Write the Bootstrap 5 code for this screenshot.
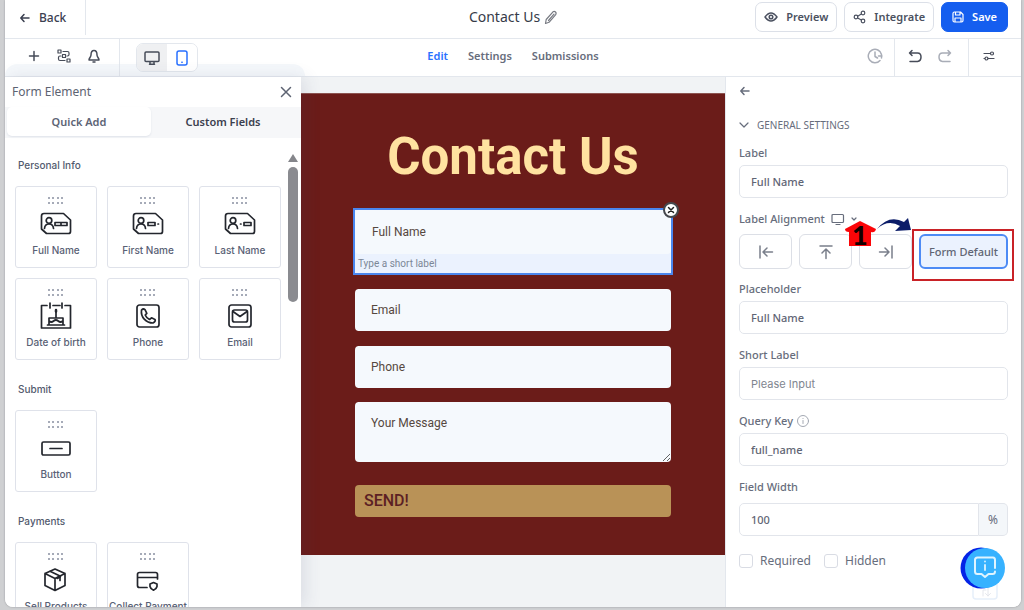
<!DOCTYPE html>
<html lang="en">
<head>
<meta charset="utf-8">
<meta name="viewport" content="width=device-width, initial-scale=1">
<title>Contact Us - Form Builder</title>
<link href="https://cdn.jsdelivr.net/npm/bootstrap@5.3.0/dist/css/bootstrap.min.css" rel="stylesheet">
<style>
  :root { --line:#e3e7ed; --ink:#474c59; --soft:#676d7c; --blue:#155eef; }
  body { background:#cfd0d2; font-family:"Noto Sans",sans-serif; font-size:12px; line-height:20px; color:var(--ink); }
  svg { display:block; flex:none; fill:none; stroke:currentColor; stroke-width:1.5; stroke-linecap:round; stroke-linejoin:round; }
  button { font-family:inherit; }
  .shell { height:100vh; padding:0 3px 3px 5px; }
  .app { background:#fff; border-radius:0 0 8px 8px; box-shadow:0 0 2px #8d8f93; }
  .bar-top { height:39px; border-bottom:1px solid var(--line); padding-bottom:4px; }
  .bar-tools { height:38px; border-bottom:1px solid var(--line); }
  .bar-tools::before { content:""; position:absolute; left:0; bottom:0; width:300px; height:12px; border-radius:40px 40px 0 0; background:#f5f8fb; }
  .side { flex:1 1 0; }
  .side.actions { gap:7px; }
  .back { width:81px; height:35px; padding-left:14px; border-right:1px solid var(--line); font-weight:500; color:#3b4050; }
  .doc-title { font-size:14px; color:#363b48; }
  .pencil { stroke:#777a82; stroke-width:1.2; }
  .top-btn { height:30px; border:1px solid #dce0e8; border-radius:7px; font-size:11px; font-weight:600; color:#4b5160; padding:0 8px; background:#fff; }
  .top-btn.save { background:var(--blue); border-color:var(--blue); color:#fff; padding:0 10px; margin-right:13px; }
  .thin { stroke-width:1.2; }
  .icon-btn { border:0; background:none; padding:0; width:30px; height:30px; display:flex; align-items:center; justify-content:center; color:inherit; }
  .faded { color:#a9adb7; }
  .tools-left { width:115px; padding:0 0 3px 14px; border-right:1px solid var(--line); }
  .devices { height:29px; border:1px solid var(--line); border-radius:7px; overflow:hidden; }
  .devices .icon-btn { background:#fff; color:#2970ff; height:100%; }
  .devices .icon-btn.on { background:#eff0f2; color:var(--ink); }
  .views { gap:20px; }
  .view-link { font-weight:600; font-size:11px; color:var(--soft); text-decoration:none; }
  .view-link.on { color:#2970ff; }
  .cell { border-left:1px solid var(--line); padding-left:5px; }
  .cell.history-nav { width:74px; }
  .cell.prefs { width:53px; }

  .elements { width:296px; box-shadow:4px 0 16px rgba(60,65,110,.12); z-index:2; }
  .elements-head { height:30px; padding:0 5px 0 7px; color:#5d6372; }
  .kinds { background:#f6f7f9; height:31px; padding:0 6px 0 2px; font-weight:600; color:#3b404e; }
  .kinds button { border:0; background:none; font:inherit; font-size:11px; color:inherit; flex:1 1 0; height:29px; }
  .kinds .on { background:#fff; border-radius:5px; color:#5d6475; box-shadow:0 1px 2px #dfe3ea; }
  .elements h3 { font:500 10px/16px Inter,sans-serif; color:#525a6e; margin:0 0 13px; padding-left:3px; }
  .tile-list { padding:19px 7px 0 10px; }
  .tiles { display:grid; grid-template-columns:repeat(3,1fr); gap:10px; margin-bottom:21px; }
  .tile { height:82px; border:1px solid #dfe2ea; border-radius:3px; background:#fff; padding:10px 0 0; display:flex; flex-direction:column; align-items:center; color:#23262d; font:500 10px/14px Inter,sans-serif; white-space:nowrap; }
  .tile .dots { fill:#a6abb8; stroke:none; }
  .tile .pic { margin:4px 0 6px; stroke-width:1.7; }
  .tile span { color:#596175; }
  .scroll-rail { width:10px; margin:16px 3px 0 0; }
  .scroll-rail i { height:135px; border-radius:5px; background:#8a8b90; margin-top:5px; }
  .scroll-rail b { border:5px solid transparent; border-top:0; border-bottom:8px solid #85868b; }

  .stage { background:#f1f3f5; padding-top:16px; }
  .paper { background:#6b1c19; font-family:Roboto,sans-serif; padding:0 54px 38px; border-top:1px solid #8c5350; }
  .paper h1 { font-size:51px; line-height:60px; font-weight:700; color:#ffe2a0; margin:0; padding:33px 0 21px; }
  .picked { border:2px solid #4a86ee; background:#ebf2fe; margin:0 -2px 14px; height:67px; }
  .box { display:block; width:100%; border:0; border-radius:4px; background:#f5f9fd; color:#55483f; height:42px; padding:0 16px; font-size:12px; }
  .box::placeholder { color:#55483f; opacity:1; }
  .picked .box { height:44px; padding:0 17px; }
  .hint { font-size:10px; line-height:20px; color:#7c8796; padding-left:3px; }
  .drop { right:-8px; top:-8px; width:16px; height:16px; border:2px solid #45484d; border-radius:50%; background:#fff; padding:1px; color:#222; }
  .gap-field { margin-bottom:15px; }
  textarea.box { height:60px; padding:12px 16px; line-height:18px; resize:vertical; margin-top:-1px; margin-bottom:23px; }
  .send { width:100%; height:32px; border:0; border-radius:4px; background:#b99257; color:#5c1f24; font-weight:500; font-size:16px; line-height:32px; text-align:left; padding:0 9px; }

  .props { width:296px; border-left:1px solid var(--line); padding:0 13px; color:var(--soft); }
  .props label, .props .cap { font-size:11px; line-height:20px; display:block; margin-bottom:2px; font-weight:500; }
  .entry { height:33px; border:1px solid #e2e5eb; border-radius:5px; padding:0 11px; font-size:11px; font-weight:500; color:#5f6574; margin-bottom:11px; width:100%; background:#fff; min-width:0; }
  .entry::placeholder { color:#80858f; opacity:1; font-family:Inter,sans-serif; font-size:11px; font-weight:400; }
  .group-head { font-size:10px; gap:8px; margin:10px 0 8px; }
  .aligns { gap:7px; margin:5px 0 10px; }
  .aligns .opt { flex:1 1 0; height:35px; border:1px solid #dcdfe6; border-radius:6px; background:#fff; color:#7a7f8b; display:flex; align-items:center; justify-content:center; padding:0; font-size:11px; font-weight:500; }
  .aligns .wide { width:89px; flex:none; }
  .aligns .wide .opt { width:100%; border:2px solid #4d8bf5; background:#ebf2fe; color:#5f6574; }
  .frame { inset:-5px -6px -12px -7px; border:2px solid #c92227; pointer-events:none; }
  .marker { left:105px; top:-17px; width:70px; height:30px; z-index:1; overflow:visible; }
  .marker text { font:900 27px Lato,sans-serif; fill:#120000; stroke:none; }
  .info { stroke:#a3a8b2; stroke-width:1; }
  .unit { width:29px; border:1px solid #e2e5eb; border-left:0; border-radius:0 5px 5px 0; background:#f4f7fa; height:33px; }
  .tick { appearance:none; width:14px; height:14px; border:1px solid #d9dce4; border-radius:3px; background:#fff; margin:0; }
  .tick:checked { background:var(--blue); }
  .props .tick-label { font-size:12px; margin:0; font-weight:400; padding:0 13px 0 7px; }
  .help { right:15px; bottom:3px; width:48px; height:58px; border:0; background:none; padding:0; }
</style>
</head>
<body>
<svg width="0" height="0" class="position-absolute" aria-hidden="true">
  <symbol id="dots" viewBox="0 0 16 8"><path d="M0 0h2v2H0zM4 0h2v2H4zM9 0h2v2H9zM13 0h2v2h-2zM0 5h2v2H0zM4 5h2v2H4zM9 5h2v2H9zM13 5h2v2h-2z"/></symbol>
  <symbol id="idcard" viewBox="0 0 32 28"><path d="M4 4.500H23.500L30.500 11V22.500Q30.500 24.500 28.500 24.500H6.500L1.500 20V7Q1.500 4.500 4 4.500Z"/><circle cx="9" cy="11.500" r="2.800"/><path d="M4.500 19.500C5 13.500 13 13.500 13.500 19.500"/></symbol>
</svg>
<div class="shell">
<div class="app h-100 d-flex flex-column overflow-hidden position-relative">
  <header class="bar-top d-flex align-items-center flex-shrink-0">
    <div class="side align-self-start">
      <a href="#" class="back d-flex align-items-center gap-2 text-decoration-none">
        <svg width="12" height="12" viewBox="0 0 12 12"><path d="M10 6H2M5 2.500 1.800 6 5 9.500"/></svg>Back</a>
    </div>
    <div class="d-flex align-items-center gap-1 doc-title">Contact Us
      <button class="border-0 bg-transparent p-0" aria-label="Rename"><svg class="pencil" width="13" height="15" viewBox="0 0 13 15"><path d="M1.500 13.500 2.200 9.500 9 1.800Q10.300 .8 11.500 2T11.500 4.800L5 12.300ZM4.500 10.500 10 4.200"/></svg></button>
    </div>
    <div class="side actions d-flex justify-content-end">
      <button class="top-btn d-flex align-items-center gap-2">
        <svg width="14" height="14" viewBox="0 0 14 14"><path d="M1 7Q7-1 13 7 7 15 1 7Z"/><circle cx="7" cy="7" r="1.800"/></svg>Preview</button>
      <button class="top-btn d-flex align-items-center gap-2">
        <svg class="thin" width="13" height="14" viewBox="0 0 13 14"><circle cx="3" cy="7" r="1.800"/><circle cx="10" cy="3" r="1.800"/><circle cx="10" cy="11" r="1.800"/><path d="M4.700 6.200 8.300 4M4.700 8l3.600 2"/></svg>Integrate</button>
      <button class="top-btn save d-flex align-items-center gap-2">
        <svg class="thin" width="12" height="12" viewBox="0 0 12 12"><path d="M2.500 1H8.500L11 3.500V9.500Q11 11 9.500 11H2.500Q1 11 1 9.500V2.500Q1 1 2.500 1ZM3.500 1v3h4.500V1M3 11V7H9v4"/></svg>Save</button>
    </div>
  </header>

  <div class="bar-tools d-flex align-items-center flex-shrink-0 position-relative">
    <div class="side d-flex align-items-center align-self-stretch position-relative">
      <div class="tools-left d-flex align-items-center align-self-stretch">
        <button class="icon-btn" aria-label="Add"><svg width="12" height="12" viewBox="0 0 12 12"><path d="M6 1.500v9M1.500 6h9"/></svg></button>
        <button class="icon-btn" aria-label="Structure"><svg class="thin" width="14" height="14" viewBox="0 0 14 14"><path d="M1 1h3v3H1zM10 10h3v3h-3zM5.500 5.500h3v3h-3zM6 2.500h4.500Q12 2.500 12 4v1.500Q12 7 10.500 7H10M4 7H3Q1.500 7 1.500 8.500v1.500Q1.500 11.500 3 11.500H8"/></svg></button>
        <button class="icon-btn" aria-label="Notifications"><svg width="12" height="14" viewBox="0 0 12 14"><path d="M6 1.500C3.500 1.500 3 4 3 6 3 8 1 9 1 11H11C11 9 9 8 9 6 9 4 8.500 1.500 6 1.500ZM5 13H7"/></svg></button>
      </div>
      <div class="devices d-flex ms-3">
        <button class="icon-btn on" aria-label="Desktop"><svg width="16" height="16" viewBox="0 0 16 16"><path d="M2 2H14Q15 2 15 3V10.500Q15 11.500 14 11.500H2Q1 11.500 1 10.500V3Q1 2 2 2ZM6 12v2M10 12v2M5.500 14.200h5"/></svg></button>
        <button class="icon-btn" aria-label="Mobile"><svg width="12" height="16" viewBox="0 0 12 16"><rect x="1" y="1" width="10" height="14" rx="2"/><path d="M5.800 12.200h.4"/></svg></button>
      </div>
    </div>
    <nav class="views d-flex pb-1" aria-label="Views">
      <a href="#" class="view-link on">Edit</a><a href="#" class="view-link">Settings</a><a href="#" class="view-link">Submissions</a>
    </nav>
    <div class="side d-flex justify-content-end align-self-stretch">
      <div class="d-flex align-items-center pe-1 pb-1 faded"><button class="icon-btn" aria-label="History"><svg width="16" height="16" viewBox="0 0 16 16"><path d="M14.500 6.500A6.700 6.700 0 1 0 13 12.500M8 4v4.500l2.500 1.500M11.500 8h3.500M14.500 7v3"/></svg></button></div>
      <div class="cell history-nav d-flex align-items-center pb-1">
        <button class="icon-btn" aria-label="Undo"><svg width="14" height="14" viewBox="0 0 14 14"><path d="M4 1.500 1.500 4 4 6.500M1.500 4H9.500Q13 4 13 8T9.500 12.500H2"/></svg></button>
        <button class="icon-btn faded" aria-label="Redo"><svg width="14" height="14" viewBox="0 0 14 14"><path d="M10 1.500 12.500 4 10 6.500M12.500 4H4.500Q1 4 1 8T4.500 12.500H12"/></svg></button>
      </div>
      <div class="cell prefs d-flex align-items-center pb-1"><button class="icon-btn" aria-label="Preferences"><svg class="thin" width="12" height="12" viewBox="0 0 12 12"><path d="M1 3.500h6M1.500 8.500H1M5 8.500h6"/><circle cx="9" cy="3.500" r="1.500"/><circle cx="3.500" cy="8.500" r="1.500"/></svg></button></div>
    </div>
  </div>

  <div class="d-flex flex-grow-1" style="min-height:0">
    <aside class="elements bg-white flex-shrink-0 d-flex flex-column position-relative">
      <div class="elements-head d-flex align-items-center justify-content-between flex-shrink-0">Form Element
        <button class="icon-btn" style="width:20px" aria-label="Close panel"><svg width="12" height="12" viewBox="0 0 12 12"><path d="m1.500 1.500 9 9M10.500 1.500l-9 9"/></svg></button></div>
      <div class="kinds d-flex flex-shrink-0"><button class="on">Quick Add</button><button>Custom Fields</button></div>
      <div class="d-flex flex-grow-1 overflow-hidden">
        <div class="tile-list flex-grow-1">
          <h3>Personal Info</h3>
          <div class="tiles">
            <button class="tile"><svg class="dots" width="16" height="8"><use href="#dots"/></svg><svg class="pic" width="32" height="28" viewBox="0 0 32 28"><use href="#idcard"/><path d="M15 13.500h12v3H15zM21 13.500v3"/></svg><span>Full Name</span></button>
            <button class="tile"><svg class="dots" width="16" height="8"><use href="#dots"/></svg><svg class="pic" width="32" height="28" viewBox="0 0 32 28"><use href="#idcard"/><path d="M16 13.500h7v3h-7zM26 15h.5"/></svg><span>First Name</span></button>
            <button class="tile"><svg class="dots" width="16" height="8"><use href="#dots"/></svg><svg class="pic" width="32" height="28" viewBox="0 0 32 28"><use href="#idcard"/><path d="M20 13.500h7v3h-7zM16.500 15h.5"/></svg><span>Last Name</span></button>
            <button class="tile"><svg class="dots" width="16" height="8"><use href="#dots"/></svg><svg class="pic" width="32" height="28" viewBox="0 0 32 28"><path d="M7 4.500H1.500V27H30.500V4.500H25M13 4.500h7M10 2v5M22 2v5"/><path d="M9 23.500v-6.500h14v6.500M9 20q2.300 2 4.600 0t4.600 0 4.600 0M7.500 24h17M16 16v-5"/><path d="M16 10.500V9" stroke-width="2.500"/></svg><span>Date of birth</span></button>
            <button class="tile"><svg class="dots" width="16" height="8"><use href="#dots"/></svg><svg class="pic" width="32" height="28" viewBox="0 0 32 28"><rect x="5" y="4" width="22" height="22" rx="2.500"/><path d="M9.500 9C8.500 16 14 22 21 22 23 21 23.500 19.500 23 18.500L19.500 16.800 17.500 18.500C15.500 17.500 14 16 13.200 14L14.800 12.300 13 8.700C12 7.800 10.500 8 9.500 9Z"/></svg><span>Phone</span></button>
            <button class="tile"><svg class="dots" width="16" height="8"><use href="#dots"/></svg><svg class="pic" width="32" height="28" viewBox="0 0 32 28"><rect x="5" y="4" width="22" height="22" rx="2.500"/><rect x="8.500" y="9" width="15" height="12" rx="2"/><path d="m9 10.500 7 5 7-5"/></svg><span>Email</span></button>
          </div>
          <h3>Submit</h3>
          <div class="tiles">
            <button class="tile"><svg class="dots" width="16" height="8"><use href="#dots"/></svg><svg class="pic" width="32" height="28" viewBox="0 0 32 28"><rect x="2" y="9" width="28" height="13" rx="1.500"/><path d="M10 15.500h12"/></svg><span>Button</span></button>
          </div>
          <h3>Payments</h3>
          <div class="tiles">
            <button class="tile"><svg class="dots" width="16" height="8"><use href="#dots"/></svg><svg class="pic" width="32" height="28" viewBox="0 0 32 28"><path d="M15 4 5 8.500V20.500L15 25.500 25 20.500V8.500ZM5 8.500 15 13.500 25 8.500M15 13.500V25.500M10 6.200 20 11v4.500"/><path d="m17.500 13 2.500-1.500" stroke-width="2.500"/></svg><span>Sell Products</span></button>
            <button class="tile"><svg class="dots" width="16" height="8"><use href="#dots"/></svg><svg class="pic" width="32" height="28" viewBox="0 0 32 28"><path d="M15 22.500H7.500Q5.500 22.500 5.500 20.500V9.500Q5.500 7.500 7.500 7.500H23.500Q25.500 7.500 25.500 9.500V14M5.500 12.500h20M18 19l3.500-1.500L25 19v2.500Q24.500 24 21.500 25.200 18.500 24 18 21.500Z"/></svg><span>Collect Payment</span></button>
          </div>
        </div>
        <div class="scroll-rail flex-shrink-0 d-flex flex-column align-items-stretch" aria-hidden="true"><b></b><i></i></div>
      </div>
    </aside>

    <main class="stage flex-grow-1">
      <form class="paper" onsubmit="return false">
        <h1 class="text-center">Contact Us</h1>
        <div class="picked position-relative">
          <input class="box" placeholder="Full Name" aria-label="Full Name">
          <div class="hint">Type a short label</div>
          <button type="button" class="drop position-absolute" aria-label="Remove field"><svg viewBox="0 0 10 10" width="10" height="10"><path d="m2.500 2.500 5 5M7.500 2.500l-5 5"/></svg></button>
        </div>
        <input type="email" class="box gap-field" placeholder="Email" aria-label="Email">
        <input type="tel" class="box gap-field" placeholder="Phone" aria-label="Phone">
        <textarea class="box" placeholder="Your Message" aria-label="Your Message"></textarea>
        <button class="send">SEND!</button>
      </form>
    </main>

    <aside class="props flex-shrink-0 overflow-hidden bg-white">
      <button class="icon-btn" style="width:12px;height:28px" aria-label="Back to fields"><svg width="12" height="12" viewBox="0 0 12 12"><path d="M10 6H2M5 2.500 1.800 6 5 9.500"/></svg></button>
      <div class="group-head d-flex align-items-center">
        <svg class="thin" width="10" height="8" viewBox="0 0 10 8"><path d="m1 2 4 4 4-4"/></svg>GENERAL SETTINGS</div>
      <label for="f-label">Label</label>
      <input id="f-label" class="entry" value="Full Name">
      <div class="cap d-flex align-items-center mb-0" style="gap:6px">Label Alignment
        <svg class="thin" width="14" height="13" viewBox="0 0 14 13"><path d="M2 1.500h9.500q1 0 1 1v6q0 1-1 1H2q-1 0-1-1v-6q0-1 1-1ZM5 11.500h4"/></svg>
        <svg class="thin" width="6" height="6" viewBox="0 0 6 6"><path d="m1 2 2 2 2-2"/></svg></div>
      <div class="aligns d-flex position-relative">
        <button class="opt" aria-label="Align left"><svg width="16" height="16" viewBox="0 0 16 16"><path d="M2 2v12M14.500 8H5.500M9 4 5 8l4 4"/></svg></button>
        <button class="opt" aria-label="Align top"><svg width="16" height="16" viewBox="0 0 16 16"><path d="M2 2h12M8 14.500V5.500M4 9l4-4 4 4"/></svg></button>
        <button class="opt" aria-label="Align right"><svg width="16" height="16" viewBox="0 0 16 16"><path d="M14 2v12M1.500 8h9M7 4l4 4-4 4"/></svg></button>
        <div class="wide position-relative"><button class="opt">Form Default</button><div class="frame position-absolute"></div></div>
        <svg class="marker position-absolute" viewBox="0 0 70 30" aria-hidden="true">
          <path d="M1 12 16 4 32 12Q31 16 27 15V29H5V15Q1 15 1 12Z" fill="#fb0508" stroke="none"/>
          <text x="8" y="28">1</text>
          <path d="M33 12Q45-3 60 5L64 1 67 13 51 14 56 9Q44 2 33 12Z" fill="#0b1c68" stroke="none"/>
        </svg>
      </div>
      <label for="f-ph">Placeholder</label>
      <input id="f-ph" class="entry" value="Full Name">
      <label for="f-short">Short Label</label>
      <input id="f-short" class="entry" placeholder="Please Input">
      <label for="f-key" class="d-flex align-items-center" style="gap:4px">Query Key
        <svg class="info" width="12" height="12" viewBox="0 0 12 12"><circle cx="6" cy="6" r="5.500"/><path d="M6 5.500v3M6 3.500v.1"/></svg></label>
      <input id="f-key" class="entry" value="full_name">
      <label for="f-width" style="margin-bottom:6px">Field Width</label>
      <div class="d-flex"><input id="f-width" class="entry rounded-end-0" value="100"><span class="unit flex-shrink-0 d-flex align-items-center justify-content-center">%</span></div>
      <div class="d-flex align-items-center pt-1">
        <input type="checkbox" class="tick" id="t-req"><label class="tick-label" for="t-req">Required</label>
        <input type="checkbox" class="tick" id="t-hid"><label class="tick-label" for="t-hid">Hidden</label>
      </div>
    </aside>
  </div>

  <button class="help position-absolute" aria-label="Help">
    <svg width="48" height="58" viewBox="0 0 48 58"><rect x="15" y="34" width="24" height="19" rx="3" stroke="#e6effa"/><path d="M25 50v-6h3M30 42v8M27.500 47.500 30 50l2.500-2.500" stroke="#e4e6ec" stroke-width="1"/><circle cx="23" cy="22" r="20.500" fill="#0423e6" stroke="none"/><circle cx="27" cy="22" r="20" fill="#37b2ff" stroke="none"/><path d="M37 22V14Q37 11.500 35 11.500H19.500Q17 11.500 17 14V25.500Q17 28 19.500 28H23.500L27 31 30.500 28H34.500Q37 28 37 25.500" stroke="#dff4ff" stroke-width="2"/><path d="M27 19v5M27 15.500v.1" stroke="#dff4ff" stroke-width="1.800"/></svg>
  </button>
</div>
</div>
<script src="https://cdn.jsdelivr.net/npm/bootstrap@5.3.0/dist/js/bootstrap.bundle.min.js"></script>
</body>
</html>
